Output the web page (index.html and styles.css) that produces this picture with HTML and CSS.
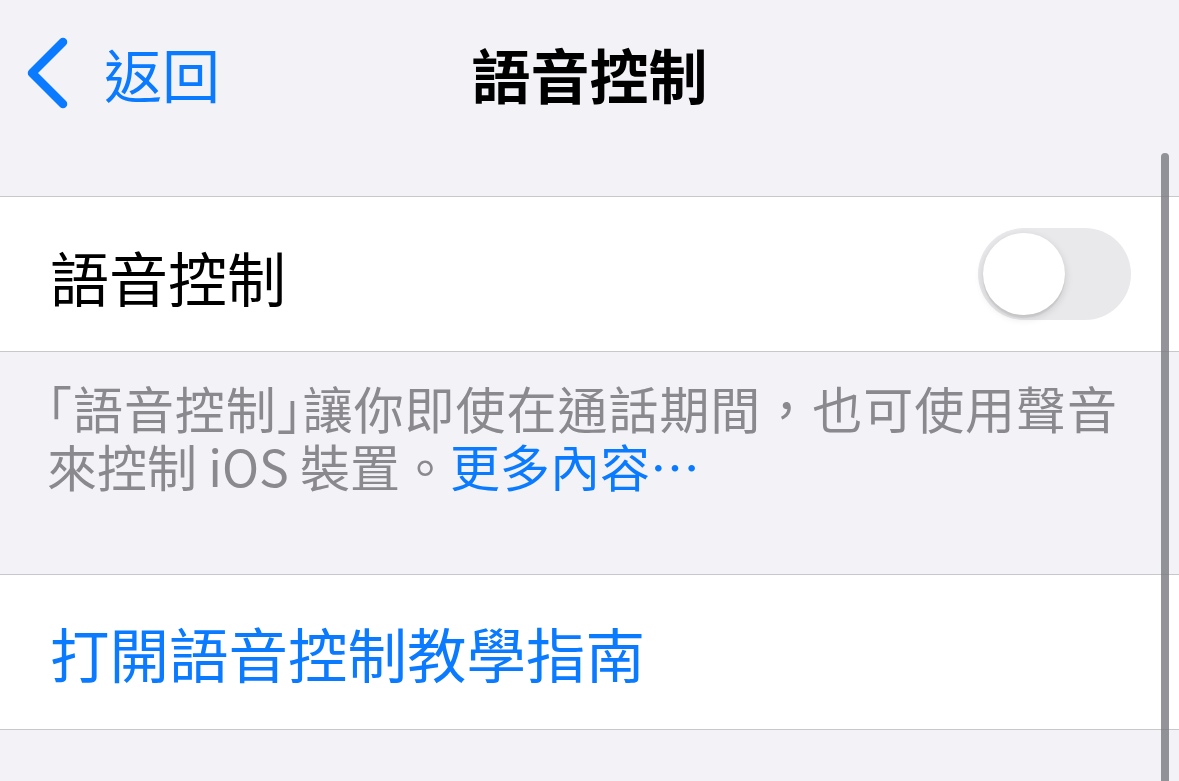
FILE: index.html
```html
<!DOCTYPE html>
<html lang="zh-Hant">
<head>
    <meta charset="UTF-8">
    <meta name="viewport" content="width=device-width, initial-scale=1.0">
    <title>語音控制</title>
    <link rel="stylesheet" href="styles.css">
</head>
<body>
    <header class="nav-bar">
        <a class="back-link" href="#">
            <svg class="chevron" width="48" height="72" viewBox="0 0 48 72">
                <polyline points="37,5 6,36 37,67" fill="none" stroke="#0a7aff" stroke-width="8.5" stroke-linecap="round" stroke-linejoin="round"/>
            </svg>
            <span>返回</span>
        </a>
        <h1 class="nav-title">語音控制</h1>
        <div></div>
    </header>

    <section class="group">
        <div class="row">
            <span class="row-label">語音控制</span>
            <div class="toggle"><div class="knob"></div></div>
        </div>
    </section>
    <p class="footer-text"><span class="half">「</span>語音控制<span class="half">」</span>讓你即使在通話期間，也可使用聲音來控制 iOS 裝置。<a href="#" class="more-link">更多內容⋯</a></p>

    <section class="group">
        <div class="row">
            <a href="#" class="row-link">打開語音控制教學指南</a>
        </div>
    </section>

    <div class="scrollbar"></div>
</body>
</html>
```

FILE: styles.css
```css
body {
    margin: 0;
    background-color: #f2f2f7;
    font-family: "Noto Sans CJK TC", "Noto Sans", sans-serif;
    color: #000;
    height: 781px;
    overflow: hidden;
    position: relative;
}

a {
    text-decoration: none;
}

.nav-bar {
    display: grid;
    grid-template-columns: 1fr auto 1fr;
    align-items: center;
    height: 146px;
    margin-bottom: 50px;
}

.back-link {
    display: flex;
    align-items: center;
    gap: 30px;
    padding-left: 26px;
    color: #0a7aff;
    font-size: 58px;
    line-height: 1;
}

.chevron {
    display: block;
}

.nav-title {
    margin: 0;
    font-size: 59px;
    font-weight: 700;
    line-height: 1;
}

.group {
    background: #fff;
    border-top: 1px solid #c8c8cc;
    border-bottom: 1px solid #c8c8cc;
}

.row {
    display: flex;
    align-items: center;
    justify-content: space-between;
    height: 154px;
    padding: 0 48px 0 50px;
}

.row-label {
    font-size: 59px;
    line-height: 1;
    padding-top: 4px;
}

.row-link {
    color: #0a7aff;
    font-size: 59.5px;
    line-height: 1;
    padding-top: 2px;
}

.toggle {
    width: 153px;
    height: 92px;
    border-radius: 46px;
    background: #e9e9eb;
    display: flex;
    align-items: center;
    padding: 0 5px;
    box-sizing: border-box;
}

.knob {
    width: 82px;
    height: 82px;
    border-radius: 50%;
    background: #fff;
    box-shadow: 0 3px 8px rgba(0, 0, 0, 0.15), 0 3px 1px rgba(0, 0, 0, 0.06);
}

.footer-text {
    margin: 0;
    padding: 26px 62px 80px 47px;
    font-size: 50px;
    line-height: 58px;
    color: #8a8a8e;
    text-align: justify;
}

.half {
    font-feature-settings: "halt";
}

.more-link {
    color: #0a7aff;
}

.scrollbar {
    position: absolute;
    top: 153px;
    right: 10px;
    width: 8px;
    height: 700px;
    border-radius: 4px;
    background: rgba(120, 120, 128, 0.8);
}
```
